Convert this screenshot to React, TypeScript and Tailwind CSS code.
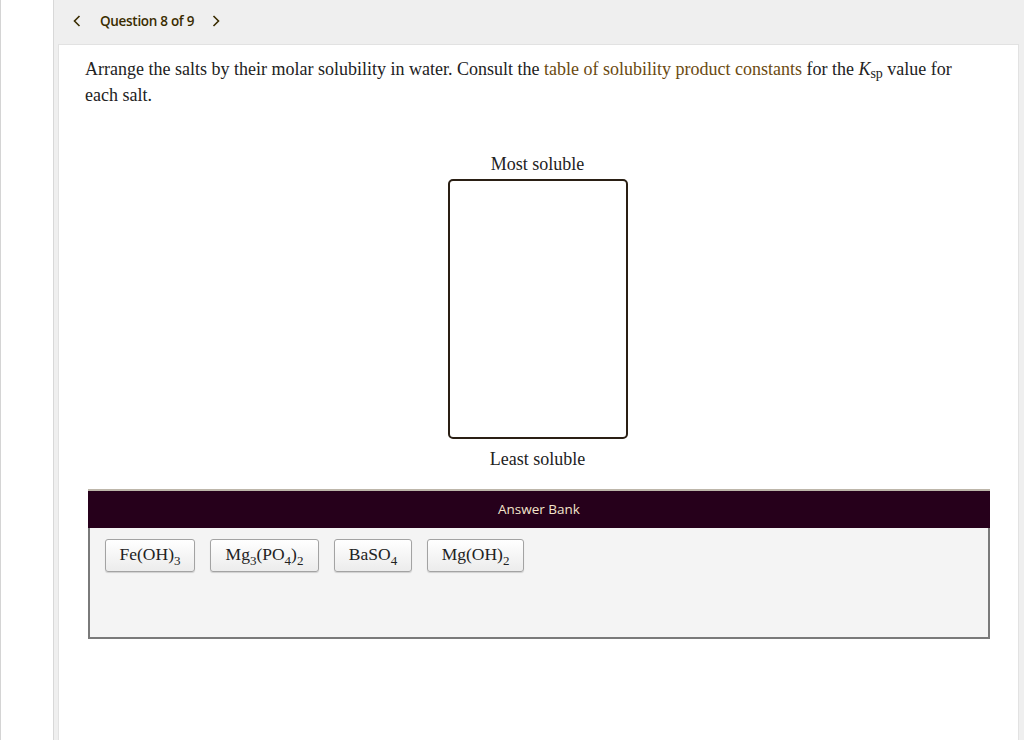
import React from "react";

const serif = "font-['Liberation_Serif',serif]";
const sans = "font-['Open_Sans',sans-serif]";

interface Salt {
  key: string;
  label: React.ReactNode;
  width: string;
}

const Sub: React.FC<{ children: React.ReactNode }> = ({ children }) => (
  <sub className="text-[13px] relative top-[5px] align-baseline">{children}</sub>
);

const salts: Salt[] = [
  { key: "feoh3", width: "w-[90px]", label: <>Fe(OH)<Sub>3</Sub></> },
  { key: "mg3po42", width: "w-[109px]", label: <>Mg<Sub>3</Sub>(PO<Sub>4</Sub>)<Sub>2</Sub></> },
  { key: "baso4", width: "w-[78px]", label: <>BaSO<Sub>4</Sub></> },
  { key: "mgoh2", width: "w-[97px]", label: <>Mg(OH)<Sub>2</Sub></> },
];

const Chevron: React.FC<{ dir: "left" | "right" }> = ({ dir }) => (
  <svg width="8" height="12" viewBox="0 0 8 12" fill="none" stroke="#3a2c00" strokeWidth="1.6">
    {dir === "left" ? <path d="M6.5 1 L1.5 6 L6.5 11" /> : <path d="M1.5 1 L6.5 6 L1.5 11" />}
  </svg>
);

export default function App() {
  return (
    <div className="flex w-[1024px] h-[740px] overflow-hidden bg-white">
      {/* left strip */}
      <div className="w-[53px] h-full border-l border-[#d4d4d4] bg-white shrink-0" />

      {/* main column */}
      <div className="flex-1 flex flex-col bg-[#efefef] border-l border-[#d8d8d8]">
        {/* question nav */}
        <div className={`h-[44px] flex items-center pb-[2px] ${sans} text-[13.5px] font-semibold text-[#3a2c00]`}>
          <div className="ml-[19px] flex items-center">
            <Chevron dir="left" />
          </div>
          <span className="ml-[19px] tracking-[-0.3px]">Question 8 of 9</span>
          <div className="ml-[18px] flex items-center">
            <Chevron dir="right" />
          </div>
        </div>

        {/* content panel */}
        <div className="flex-1 ml-[4px] mr-[5px] bg-white border-l border-t border-r border-[#e2e2e2]">
          <p className={`${serif} text-[18px] leading-[26px] text-[#222] pl-[26px] pr-[50px] pt-[11px]`}>
            Arrange the salts by their molar solubility in water. Consult the{" "}
            <span className="text-[#6b4a10]">table of solubility product constants</span> for the{" "}
            <i>K</i>
            <sub className="text-[14px] relative top-[3px] align-baseline">sp</sub> value for each salt.
          </p>

          {/* ranking box */}
          <div className={`${serif} flex flex-col items-center mt-[45px] mr-[2px]`}>
            <div className="text-[18px] text-[#222] leading-[22px]">Most soluble</div>
            <div className="mt-[4px] w-[180px] h-[260px] border-2 border-[#2a1f14] rounded-[5px]" />
            <div className="mt-[9px] text-[18px] text-[#222] leading-[22px]">Least soluble</div>
          </div>

          {/* answer bank */}
          <div className="mt-[19px] ml-[29px] w-[902px] border-t-2 border-[#bdb6aa]">
            <div className={`h-[37px] bg-[#26001b] flex items-center justify-center ${sans} text-[13.5px] text-[#f3e4cc]`}>
              Answer Bank
            </div>
            <div className="h-[111px] bg-[#f4f4f4] border-2 border-t-0 border-[#7a7a7a] flex items-start gap-[15px] pl-[15px] pt-[11px]">
              {salts.map((s) => (
                <div
                  key={s.key}
                  className={`${s.width} h-[33px] flex items-center justify-center pb-[2px] rounded-[3px] border border-[#a3a3a3] bg-gradient-to-b from-white to-[#ececec] shadow-[0_1px_1px_rgba(0,0,0,0.15)] ${serif} text-[17.5px] text-[#222]`}
                >
                  <span>{s.label}</span>
                </div>
              ))}
            </div>
          </div>
        </div>
      </div>
    </div>
  );
}
